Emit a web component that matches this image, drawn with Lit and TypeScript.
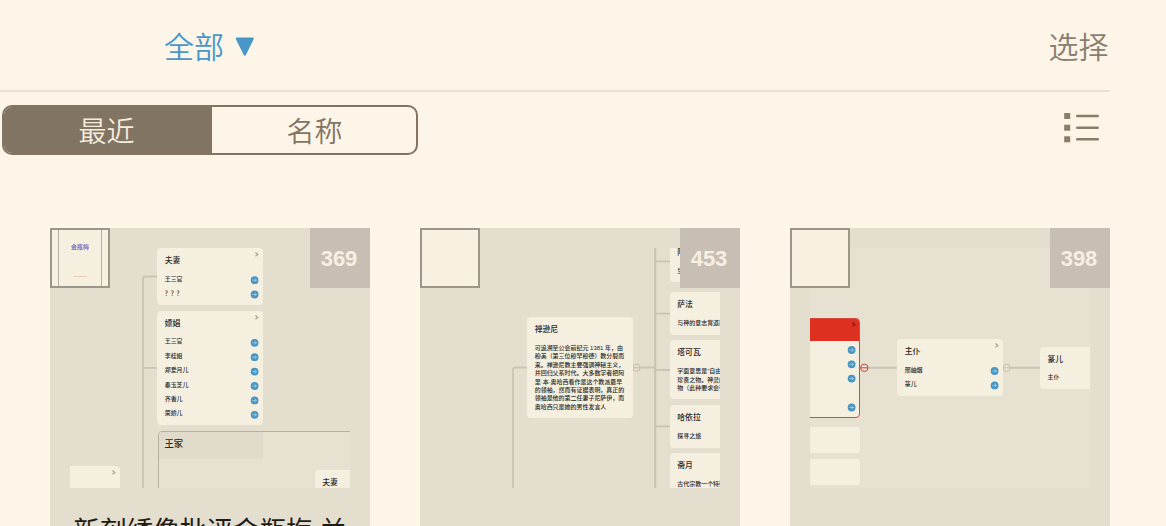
import { LitElement, html, css, svg, nothing } from "lit";
import { customElement, property, state } from "lit/decorators.js";
import { classMap } from "lit/directives/class-map.js";
import { styleMap } from "lit/directives/style-map.js";

interface MapNode {
  x: number;
  y: number;
  w: number;
  h: number;
  title?: string;
  rows?: string[];
  text?: string[];
  // Vertical centres of link badges, relative to the node
  links?: number[];
  chevron?: boolean;
  kind?: "group" | "active";
}

interface MapHandle {
  x: number;
  y: number;
  active?: boolean;
}

interface Notebook {
  title: string;
  count: number;
  cover?: string;
  tinted?: boolean;
  nodes: MapNode[];
  wires: { d: string; width: number }[];
  handles: MapHandle[];
}

const NOTEBOOKS: Notebook[] = [
  {
    title: "新刻绣像批评金瓶梅 兰",
    count: 369,
    cover: "金瓶梅",
    nodes: [
      { x: 87.2, y: 0.3, w: 105.6, h: 56.6, title: "夫妻", rows: ["王三官", "？？？"], links: [32.2, 46.5], chevron: true },
      {
        x: 87.2,
        y: 63,
        w: 105.6,
        h: 114,
        title: "嫖娼",
        rows: ["王三官", "李桂姐", "郑爱月儿", "秦玉芝儿", "齐香儿", "荣娇儿"],
        links: [31.8, 46.2, 60.6, 75, 89.4, 103.8],
        chevron: true,
      },
      { x: 87.5, y: 183, w: 240, h: 100, title: "王家", kind: "group" },
      { x: -55.6, y: 218.4, w: 105.6, h: 56, chevron: true },
      { x: 244.8, y: 221.5, w: 105.6, h: 56, title: "夫妻" },
    ],
    wires: [
      { d: "M73 240V31q0-2.5 2.5-2.5H88M73 119.8H88", width: 1.8 },
    ],
    handles: [],
  },
  {
    title: "",
    count: 453,
    nodes: [
      {
        x: 87.2,
        y: 69.2,
        w: 105.6,
        h: 101.2,
        title: "禅逊尼",
        text: [
          "可追溯至公会前纪元 1381 年，由",
          "穆美（第三位穆罕穆德）教分裂而",
          "来。禅逊尼教主要强调神秘主义，",
          "并回归父系时代。大多数学者把阿",
          "里·本·奥哈西看作是这个教派最早",
          "的领袖，然而有证据表明，真正的",
          "领袖是他的第二任妻子尼萨伊，而",
          "奥哈西只是她的男性发言人",
        ],
      },
      { x: 229.8, y: -7.6, w: 105.6, h: 42, title: "阿丹", text: ["生命之源"] },
      { x: 229.8, y: 44.3, w: 105.6, h: 42.6, title: "萨法", text: ["与神的意志背道而驰"] },
      { x: 229.8, y: 92.4, w: 105.6, h: 58.8, title: "塔可瓦", text: ["字面意思是\"自由的代价", "珍贵之物。神灵的恩赐之", "物（此种要求会带来的"] },
      { x: 229.8, y: 157, w: 105.6, h: 42.6, title: "哈依拉", text: ["探寻之旅"] },
      { x: 229.8, y: 205.2, w: 105.6, h: 42.6, title: "斋月", text: ["古代宗教一个特殊的月"] },
    ],
    wires: [
      { d: "M73 240V122q0-2.5 2.5-2.5H88M216 13.3h14M216 65.7h14M216 122h14M216 178.3h14", width: 1.8 },
      { d: "M215.2 0V240M200 119.5h15", width: 2.2 },
    ],
    handles: [{ x: 196.5, y: 119.7 }],
  },
  {
    title: "",
    count: 398,
    tinted: true,
    nodes: [
      { x: -55.6, y: 70, w: 105.6, h: 99.7, kind: "active", links: [32, 46.3, 60.6, 89.5], chevron: true },
      { x: -55.6, y: 178.7, w: 105.6, h: 26.4 },
      { x: -55.6, y: 210.8, w: 105.6, h: 26.4 },
      { x: 87.2, y: 91.4, w: 105.4, h: 56.6, title: "主仆", rows: ["邢岫烟", "篆儿"], links: [32, 46.4], chevron: true },
      { x: 230, y: 98.8, w: 105.6, h: 42.4, title: "篆儿", rows: ["主仆"] },
    ],
    wires: [{ d: "M58 119.8H88M200.5 119.8H231", width: 2 }],
    handles: [
      { x: 54.3, y: 119.8, active: true },
      { x: 196.5, y: 119.8 },
    ],
  },
];

@customElement("map-node")
export class MapNodeElement extends LitElement {
  @property({ attribute: false }) node!: MapNode;

  static styles = css`
    :host {
      display: block;
    }

    .node {
      position: relative;
      box-sizing: border-box;
      height: 100%;
      padding-left: 7.5px;
      border-radius: 4px;
      background: #f5efdf;
      color: #2b271f;
      overflow: hidden;
      white-space: nowrap;
    }

    .title {
      height: 23.4px;
      line-height: 25px;
      font-size: 7.8px;
      font-weight: 500;
    }

    .row {
      height: 14.4px;
      line-height: 14.6px;
      font-size: 5.95px;
      font-weight: 500;
    }

    .text {
      padding-top: 3.4px;
      font-size: 5.98px;
      font-weight: 500;
    }

    .line {
      height: 8.4px;
      line-height: 8.4px;
    }

    .group {
      padding: 0;
      border: 1px solid #b4afa2;
      background: #e7e1d1;
    }

    .group .title {
      width: 98px;
      height: 27px;
      padding-left: 6px;
      line-height: 25px;
      font-size: 9.3px;
      background: #e1dbcb;
    }

    .active {
      border: 1px solid #d64a3e;
    }

    .active::before {
      content: "";
      position: absolute;
      inset: 0 0 auto;
      height: 22px;
      background: #de3021;
    }

    .mark {
      position: absolute;
      top: 0;
      right: 0;
    }

    .active .mark {
      top: -1px;
      right: -1px;
    }
  `;

  private _renderMarks() {
    const { links = [], chevron, kind } = this.node;
    const stroke = kind === "active" ? "#7d1a12" : "#aaa496";
    return svg`
      ${chevron
        ? svg`<path d="M8.4 4.6l2.4 1.8-2.4 1.8" fill="none" stroke=${stroke} stroke-width="1.2"/>`
        : nothing}
      ${links.map(
        (y) => svg`
          <circle cx="7.6" cy=${y} r="3.9" fill="#4897c2"/>
          <path d=${`M5.4 ${y}h4M7.8 ${y - 1.4}l1.7 1.4-1.7 1.4`} fill="none" stroke="#a5cbdd" stroke-width="0.9"/>
        `
      )}
    `;
  }

  render() {
    const { title, rows = [], text, kind, h } = this.node;
    return html`
      <div class=${classMap({ node: true, group: kind === "group", active: kind === "active" })}>
        ${title ? html`<div class="title">${title}</div>` : nothing}
        ${rows.map((row) => html`<div class="row">${row}</div>`)}
        ${text
          ? html`<div class="text">${text.map((line) => html`<div class="line">${line}</div>`)}</div>`
          : nothing}
        <svg class="mark" width="16" height=${h}>${this._renderMarks()}</svg>
      </div>
    `;
  }
}

@customElement("notebook-card")
export class NotebookCard extends LitElement {
  @property({ attribute: false }) book!: Notebook;

  static styles = css`
    :host {
      display: block;
      position: relative;
      box-sizing: border-box;
      width: 320px;
      height: 360px;
      padding: 20px;
      background: #e4dece;
    }

    .canvas {
      position: relative;
      height: 240px;
      overflow: hidden;
    }

    .tinted {
      background: #e7e1d1;
    }

    .wires {
      position: absolute;
      inset: 0;
    }

    map-node {
      position: absolute;
    }

    .cover,
    .count {
      position: absolute;
      top: 0;
      box-sizing: border-box;
      width: 60px;
      height: 60px;
    }

    .cover {
      left: 0;
      display: flex;
      justify-content: center;
      border: 2px solid #9b968a;
      background: #f8f0e0;
    }

    .page {
      display: flex;
      flex-direction: column;
      align-items: center;
      justify-content: space-between;
      box-sizing: border-box;
      width: 44px;
      padding: 12px 0 9px;
      border: solid #b3ada2;
      border-width: 0 1px;
      background: #f5efdf;
      color: #7a74c0;
      font-size: 6px;
      line-height: 10px;
      font-weight: 700;
    }

    .page-name {
      filter: blur(0.5px);
    }

    .imprint {
      width: 13px;
      height: 1px;
      background: #eccbb2;
    }

    .count {
      right: 0;
      display: flex;
      align-items: center;
      justify-content: center;
      padding-right: 2px;
      padding-top: 2px;
      background: #c7bfb4;
      color: #f7f0e2;
      font: 700 22px "Liberation Sans", Arial, sans-serif;
    }

    .name {
      margin-top: 23px;
      font-size: 26.6px;
      line-height: 40px;
      font-weight: 400;
      text-align: center;
      white-space: nowrap;
      color: #1f1b15;
    }
  `;

  render() {
    const { title, count, cover, tinted, nodes, wires, handles } = this.book;
    return html`
      <div class=${classMap({ canvas: true, tinted: !!tinted })}>
        <svg class="wires" width="280" height="240" fill="none">
          ${wires.map((w) => svg`<path d=${w.d} stroke="#cac4b6" stroke-width=${w.width}/>`)}
          ${handles.map(
            (p) => svg`
              <circle cx=${p.x} cy=${p.y} r="3.7" fill=${tinted ? "#e7e1d1" : "#e4dece"} stroke=${p.active ? "#c9473b" : "#c5bfb0"}/>
              <path d=${`M${p.x - 3.5} ${p.y}h7`} stroke=${p.active ? "#c9473b" : "#c5bfb0"}/>
            `
          )}
        </svg>
        ${nodes.map(
          (n) => html`
            <map-node
              .node=${n}
              style=${styleMap({ left: `${n.x}px`, top: `${n.y}px`, width: `${n.w}px`, height: `${n.h}px` })}
            ></map-node>
          `
        )}
      </div>
      <div class="name">${title}</div>
      <div class="cover">
        ${cover
          ? html`<div class="page"><span class="page-name">${cover}</span><span class="imprint"></span></div>`
          : nothing}
      </div>
      <div class="count">${count}</div>
    `;
  }
}

@customElement("app-root")
export class AppRoot extends LitElement {
  @state() private _sort = 0;

  static styles = css`
    :host {
      display: block;
      box-sizing: border-box;
      height: 526px;
      padding-right: 56px;
      overflow: hidden;
      background: #fdf5e7;
      color: #827463;
      font-family: "Liberation Sans", "Noto Sans CJK SC", sans-serif;
    }

    header {
      display: flex;
      align-items: center;
      justify-content: space-between;
      box-sizing: border-box;
      height: 92px;
      padding: 0 1.5px 0 164px;
      border-bottom: 2px solid #e9e2d6;
      font: 350 30px "Noto Sans CJK SC", sans-serif;
      line-height: 44px;
    }

    .filter {
      display: flex;
      align-items: center;
      gap: 11px;
      color: #4897c8;
    }

    .arrow {
      margin-top: 4px;
    }

    .select {
      color: #8b7e6f;
    }

    .toolbar {
      display: flex;
      justify-content: space-between;
      padding: 13px 10px 0 2px;
    }

    .segments {
      display: grid;
      grid-template-columns: 208px 204px;
      box-sizing: border-box;
      width: 416px;
      height: 50px;
      border: 2px solid #827463;
      border-radius: 10px;
      overflow: hidden;
    }

    .segment {
      padding: 0 0 1px 1px;
      border: 0;
      background: none;
      color: #827463;
      font: 350 28px "Noto Sans CJK SC", sans-serif;
      line-height: 44px;
    }

    .segment.selected {
      padding-right: 4px;
      background: #827463;
      color: #f5ecdb;
    }

    .list-icon {
      margin-top: 7px;
    }

    .grid {
      display: flex;
      gap: 50px;
      padding: 73px 0 0 50px;
    }
  `;

  render() {
    return html`
      <header>
        <div class="filter">
          <span>全部</span>
          <svg class="arrow" width="20" height="20" viewBox="0 0 20 20">
            <path d="M2 1.7h15.6L9.8 17.5z" fill="#4897c8" stroke="#4897c8" stroke-width="2.4" stroke-linejoin="round"/>
          </svg>
        </div>
        <div class="select">选择</div>
      </header>
      <div class="toolbar">
        <div class="segments">
          ${["最近", "名称"].map(
            (label, i) => html`
              <button
                class=${classMap({ segment: true, selected: this._sort === i })}
                @click=${() => (this._sort = i)}
              >${label}</button>
            `
          )}
        </div>
        <svg class="list-icon" width="36" height="32" viewBox="0 0 36 32">
          ${[4, 15.7, 27.3].map(
            (y) => svg`
              <rect x="0.2" y=${y - 3} width="6" height="6" fill="#8b7d6d"/>
              <path d=${`M13.3 ${y}h20.4`} stroke="#8b7d6d" stroke-width="2.6" stroke-linecap="round"/>
            `
          )}
        </svg>
      </div>
      <div class="grid">
        ${NOTEBOOKS.map((book) => html`<notebook-card .book=${book}></notebook-card>`)}
      </div>
    `;
  }
}
